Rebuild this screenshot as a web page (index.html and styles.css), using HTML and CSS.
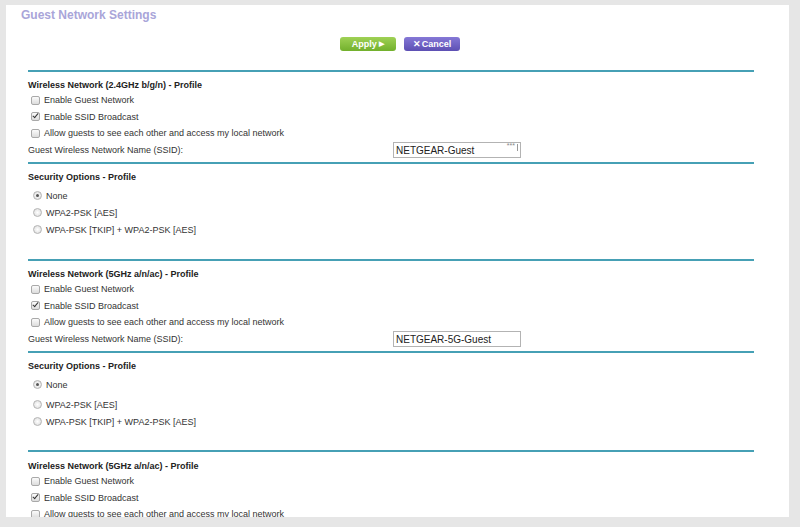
FILE: index.html
```html
<!DOCTYPE html>
<html lang="en">
<head>
  <meta charset="UTF-8">
  <meta name="viewport" content="width=device-width, initial-scale=1.0">
  <title>Guest Network Settings</title>
  <link rel="stylesheet" href="styles.css">
</head>
<body>
  <div class="panel">
    <h1 class="page-title">Guest Network Settings</h1>

    <div class="buttons">
      <button class="btn btn-apply">Apply <span class="arrow">&#9654;</span></button>
      <button class="btn btn-cancel"><span class="x">&#10005;</span>Cancel</button>
    </div>

    <div class="sections">
      <!-- 2.4GHz -->
      <div class="section profile">
        <h3>Wireless Network (2.4GHz b/g/n) - Profile</h3>
        <div class="row"><span class="cb"></span>Enable Guest Network</div>
        <div class="row"><span class="cb on"></span>Enable SSID Broadcast</div>
        <div class="row"><span class="cb"></span>Allow guests to see each other and access my local network</div>
        <div class="row ssid-row">
          <span class="ssid-label">Guest Wireless Network Name (SSID):</span>
          <span class="ssid-field">
            <input type="text" value="NETGEAR-Guest">
            <span class="pw-hint">***</span><span class="pw-bar"></span>
          </span>
        </div>
      </div>
      <div class="section security">
        <h3>Security Options - Profile</h3>
        <div class="options">
          <div class="row"><span class="rb on"></span>None</div>
          <div class="row"><span class="rb"></span>WPA2-PSK [AES]</div>
          <div class="row"><span class="rb"></span>WPA-PSK [TKIP] + WPA2-PSK [AES]</div>
        </div>
      </div>

      <!-- 5GHz -->
      <div class="section profile">
        <h3>Wireless Network (5GHz a/n/ac) - Profile</h3>
        <div class="row"><span class="cb"></span>Enable Guest Network</div>
        <div class="row"><span class="cb on"></span>Enable SSID Broadcast</div>
        <div class="row"><span class="cb"></span>Allow guests to see each other and access my local network</div>
        <div class="row ssid-row">
          <span class="ssid-label">Guest Wireless Network Name (SSID):</span>
          <span class="ssid-field">
            <input type="text" value="NETGEAR-5G-Guest">
          </span>
        </div>
      </div>
      <div class="section security security-5g">
        <h3>Security Options - Profile</h3>
        <div class="options">
          <div class="row"><span class="rb on"></span>None</div>
          <div class="row spaced"><span class="rb"></span>WPA2-PSK [AES]</div>
          <div class="row"><span class="rb"></span>WPA-PSK [TKIP] + WPA2-PSK [AES]</div>
        </div>
      </div>

      <!-- 5GHz second -->
      <div class="section profile last">
        <h3>Wireless Network (5GHz a/n/ac) - Profile</h3>
        <div class="row"><span class="cb"></span>Enable Guest Network</div>
        <div class="row"><span class="cb on"></span>Enable SSID Broadcast</div>
        <div class="row"><span class="cb"></span>Allow guests to see each other and access my local network</div>
        <div class="row ssid-row">
          <span class="ssid-label">Guest Wireless Network Name (SSID):</span>
          <span class="ssid-field">
            <input type="text" value="NETGEAR-5G-Guest-2">
          </span>
        </div>
      </div>
    </div>
  </div>
</body>
</html>
```

FILE: styles.css
```css
body {
  margin: 0;
  background-color: #e6e6e6;
  font-family: "Liberation Sans", Arial, sans-serif;
  color: #333;
}
.panel {
  margin: 5px 11px 0 6px;
  height: 512px;
  background-color: #fff;
  overflow: hidden;
}
.page-title {
  margin: 0;
  padding: 3px 0 0 15px;
  font-size: 12px;
  line-height: 14px;
  font-weight: bold;
  color: #a9a5d9;
}
.buttons {
  display: flex;
  justify-content: center;
  gap: 8px;
  padding: 15px 0 0 5px;
}
.btn {
  width: 56px;
  height: 14px;
  padding: 0;
  border: none;
  border-radius: 3px;
  color: #fff;
  font-family: "Liberation Sans", Arial, sans-serif;
  font-weight: bold;
  font-size: 9px;
  line-height: 14px;
  cursor: pointer;
}
.btn-apply {
  background: linear-gradient(#9fd155, #72b02c);
}
.btn-apply .arrow {
  font-size: 7px;
  vertical-align: 1px;
}
.btn-cancel {
  background: linear-gradient(#8578d6, #5d4fb3);
}
.btn-cancel .x {
  font-size: 9px;
  margin-right: 1px;
}
.sections {
  margin: 19px 35px 0 22px;
}
.section {
  border-top: 2px solid #46a0b5;
  padding-top: 6px;
}
.section h3 {
  margin: 0;
  font-size: 9px;
  line-height: 14px;
  font-weight: bold;
  color: #222;
}
.row {
  display: flex;
  align-items: center;
  height: 16.5px;
  font-size: 9px;
}
.ssid-row {
  height: 17px;
  margin-bottom: 3.5px;
}
.ssid-label {
  width: 365px;
}
.ssid-field {
  position: relative;
  display: flex;
}
.ssid-field input {
  width: 128px;
  height: 16px;
  box-sizing: border-box;
  margin: 0;
  padding: 0 2px;
  border: 1px solid #b3b3b3;
  font-family: "Liberation Sans", Arial, sans-serif;
  font-size: 10px;
  color: #222;
}
.pw-hint {
  position: absolute;
  right: 6px;
  top: 0;
  font-size: 7px;
  line-height: 8px;
  color: #888;
}
.pw-bar {
  position: absolute;
  right: 3px;
  top: 2px;
  width: 1px;
  height: 7px;
  background-color: #999;
}
.security {
  padding-bottom: 21px;
}
.security-5g {
  padding-bottom: 20px;
}
.security .options {
  padding-top: 3px;
}
.security .row {
  height: 17px;
}
.security .spaced {
  margin-top: 3px;
}
.last {
  padding-top: 7px;
}
.cb {
  position: relative;
  width: 7px;
  height: 7px;
  margin: 0 4px 0 3px;
  border: 1px solid #a9a9a9;
  border-radius: 2px;
  background: linear-gradient(#fbfbfb, #dcdcdc);
}
.cb.on::after {
  content: "";
  position: absolute;
  left: 2px;
  top: -1px;
  width: 2px;
  height: 5px;
  border: solid #333;
  border-width: 0 1.5px 1.5px 0;
  transform: rotate(40deg);
}
.rb {
  position: relative;
  width: 7px;
  height: 7px;
  margin: 0 4px 0 5px;
  border: 1px solid #b4b4b4;
  border-radius: 50%;
  background: radial-gradient(#fff, #d9d9d9);
}
.rb.on::after {
  content: "";
  position: absolute;
  left: 2px;
  top: 2px;
  width: 3px;
  height: 3px;
  border-radius: 50%;
  background-color: #555;
}
```
